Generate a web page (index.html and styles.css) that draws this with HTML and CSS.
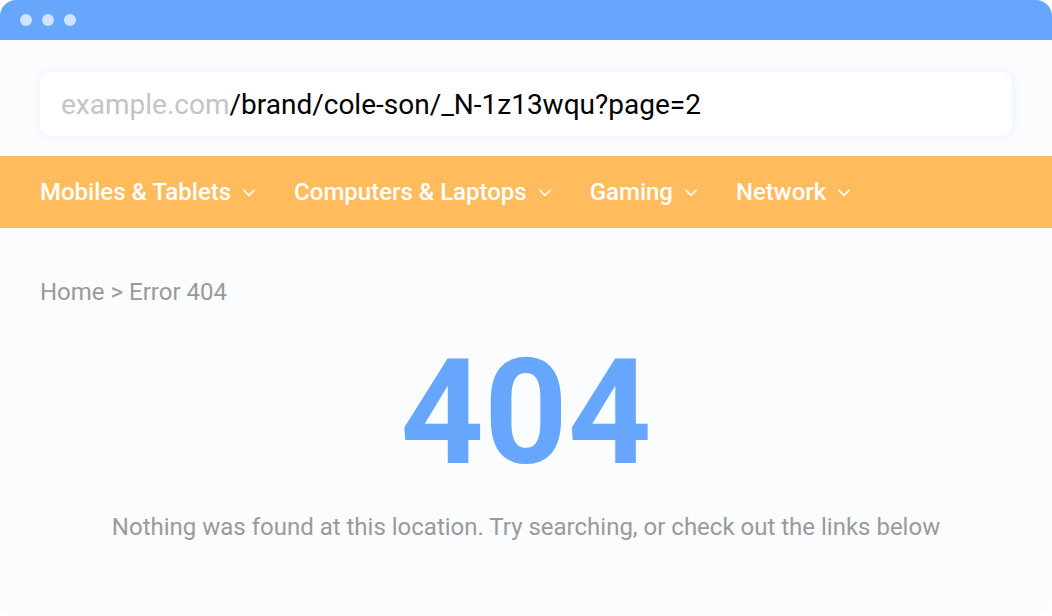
FILE: index.html
```html
<!DOCTYPE html>
<html lang="en">

<head>
    <meta charset="UTF-8" />
    <meta name="viewport" content="width=device-width, initial-scale=1.0" />
    <title>Error 404</title>
    <link rel="stylesheet" href="styles.css">
</head>

<body>
    <div class="window">
        <div class="titlebar">
            <span class="dot"></span>
            <span class="dot"></span>
            <span class="dot"></span>
        </div>
        <div class="address">
            <div class="url"><span class="host">example.com</span>/brand/cole-son/_N-1z13wqu?page=2</div>
        </div>
        <nav class="menu">
            <a class="item">Mobiles &amp; Tablets <svg class="chev" viewBox="0 0 16 16"><path d="M3 6l5 5 5-5" /></svg></a>
            <a class="item">Computers &amp; Laptops <svg class="chev" viewBox="0 0 16 16"><path d="M3 6l5 5 5-5" /></svg></a>
            <a class="item">Gaming <svg class="chev" viewBox="0 0 16 16"><path d="M3 6l5 5 5-5" /></svg></a>
            <a class="item">Network <svg class="chev" viewBox="0 0 16 16"><path d="M3 6l5 5 5-5" /></svg></a>
        </nav>
        <div class="content">
            <p class="crumbs">Home &gt; Error 404</p>
            <h1 class="code">404</h1>
            <p class="message">Nothing was found at this location. Try searching, or check out the links below</p>
        </div>
    </div>
</body>

</html>
```

FILE: styles.css
```css
* {
    margin: 0;
    padding: 0;
    box-sizing: border-box;
    --blue: #66a6fc;
    --orange: #ffbb5c;
    --grey: #9a9a9a;
    --page: #fafcfe;
}

body {
    background-color: #ffffff;
    font-family: Roboto, "Liberation Sans", sans-serif;
}

.window {
    width: 1052px;
    height: 616px;
    border-radius: 16px;
    overflow: hidden;
    background-color: var(--page);
}

.titlebar {
    height: 40px;
    background-color: var(--blue);
    display: flex;
    align-items: center;
    gap: 10px;
    padding-left: 20px;
}

.dot {
    width: 12px;
    height: 12px;
    border-radius: 50%;
    background-color: #d0e2fe;
}

.address {
    padding: 32px 40px 20px;
}

.url {
    height: 64px;
    background-color: #ffffff;
    border-radius: 10px;
    box-shadow: 0 0 10px rgba(120, 150, 210, 0.12);
    display: flex;
    align-items: center;
    padding-left: 21px;
    font-size: 28px;
    color: #000000;
}

.host {
    color: #c4c4c4;
}

.menu {
    height: 72px;
    background-color: var(--orange);
    display: flex;
    align-items: center;
    padding: 0 40px;
    gap: 36px;
}

.item {
    color: #ffffff;
    font-size: 24px;
    font-weight: 500;
    display: flex;
    align-items: center;
    gap: 9px;
}

.chev {
    width: 18px;
    height: 18px;
    fill: none;
    stroke: #ffffff;
    stroke-width: 1.4;
}

.content {
    padding: 50px 40px 0;
}

.crumbs {
    font-size: 24px;
    line-height: 28px;
    color: var(--grey);
}

.code {
    text-align: center;
    font-size: 146px;
    font-weight: 700;
    line-height: 1;
    color: var(--blue);
    margin-top: 35px;
}

.message {
    text-align: center;
    font-size: 24px;
    line-height: 28px;
    color: var(--grey);
    margin-top: 26px;
}
```
